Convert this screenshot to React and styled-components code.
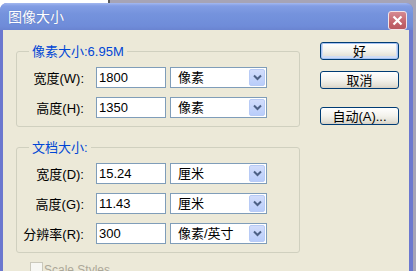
import React from 'react'
import styled, { createGlobalStyle } from 'styled-components'

const GlobalStyle = createGlobalStyle`
  html, body {
    margin: 0;
    padding: 0;
    width: 416px;
    height: 271px;
    overflow: hidden;
    background: linear-gradient(to right, #ffffff 0 108px, #5a5a5a 108px 110px, #a6a4b6 110px);
  }
  body {
    font-family: "Liberation Sans", "Noto Sans CJK SC", sans-serif;
    font-size: 13px;
    color: #000;
  }
`

function Chevron() {
  return (
    <svg width="9" height="7" viewBox="0 0 9 7">
      <path d="M1 1.5 L4.5 5 L8 1.5" fill="none" stroke="#4d6185" strokeWidth="2" />
    </svg>
  )
}

function Field({ label, value, unit }) {
  return (
    <FieldRow>
      <FieldLabel>{label}</FieldLabel>
      <TextBox>{value}</TextBox>
      <Select>
        <SelectText>{unit}</SelectText>
        <SelectArrow>
          <Chevron />
        </SelectArrow>
      </Select>
    </FieldRow>
  )
}

export default function App() {
  return (
    <>
      <GlobalStyle />
      <Window>
        <TitleBar>
          <Title>图像大小</Title>
          <CloseButton>
            <svg width="11" height="11" viewBox="0 0 11 11">
              <path d="M1.5 1.5 L9.5 9.5 M9.5 1.5 L1.5 9.5" stroke="#fff" strokeWidth="2.2" />
            </svg>
          </CloseButton>
        </TitleBar>
        <Body>
          <LeftColumn>
            <Group $top={14}>
              <Caption>像素大小:6.95M</Caption>
              <Fields>
                <Field label="宽度(W):" value="1800" unit="像素" />
                <Field label="高度(H):" value="1350" unit="像素" />
              </Fields>
            </Group>
            <Group $top={13}>
              <Caption>文档大小:</Caption>
              <Fields>
                <Field label="宽度(D):" value="15.24" unit="厘米" />
                <Field label="高度(G):" value="11.43" unit="厘米" />
                <Field label="分辨率(R):" value="300" unit="像素/英寸" />
              </Fields>
            </Group>
            <CheckRow>
              <CheckBox />
              <CheckLabel>Scale Styles</CheckLabel>
            </CheckRow>
          </LeftColumn>
          <ButtonColumn>
            <Button $default $gap={0}>好</Button>
            <Button $gap={11}>取消</Button>
            <Button $gap={18}>自动(A)...</Button>
          </ButtonColumn>
        </Body>
      </Window>
    </>
  )
}

const Window = styled.div`
  margin-top: 3px;
  width: 413px;
  height: 268px;
  display: flex;
  flex-direction: column;
  background: #6b78cf;
  border-radius: 7px 7px 0 0;
  overflow: hidden;
`

const TitleBar = styled.div`
  height: 27px;
  flex: none;
  display: flex;
  align-items: center;
  justify-content: space-between;
  padding: 0 6px 0 8px;
  background: linear-gradient(#a3b8f0 0, #829de4 3px, #7593dd 40%, #6f8cd9 85%, #6a84d1 100%);
`

const Title = styled.span`
  color: #fff;
  font-size: 14px;
  line-height: 16px;
  text-shadow: 0 0 1px rgba(60, 80, 150, 0.6);
  margin-top: 1px;
`

const CloseButton = styled.div`
  width: 19px;
  height: 19px;
  margin-top: 7px;
  box-sizing: border-box;
  border: 1px solid #f3e4e8;
  border-radius: 3px;
  background: linear-gradient(#d58a92, #c4646d 60%, #b85860);
  display: flex;
  align-items: center;
  justify-content: center;
`

const Body = styled.div`
  flex: 1;
  display: flex;
  margin: 0 4px 0 3px;
  padding-left: 13px;
  background: #ece9d8;
`

const LeftColumn = styled.div`
  display: flex;
  flex-direction: column;
  width: 284px;
`

const Group = styled.fieldset`
  margin: ${p => p.$top}px 0 0;
  padding: 8px 31px 8px 0;
  min-width: 0;
  border: 1px solid #d0d0bf;
  border-radius: 3px;
`

const Caption = styled.legend`
  margin-left: 12px;
  padding: 0 3px;
  line-height: 15px;
  color: #0046d5;
`

const Fields = styled.div`
  display: flex;
  flex-direction: column;
  gap: 9px;
`

const FieldRow = styled.div`
  display: flex;
  align-items: center;
  height: 21px;
`

const FieldLabel = styled.span`
  width: 67px;
  margin-right: 12px;
  text-align: right;
  white-space: nowrap;
`

const TextBox = styled.div`
  width: 70px;
  height: 21px;
  box-sizing: border-box;
  border: 1px solid #7f9db9;
  background: #fff;
  padding: 0 2px;
  line-height: 19px;
`

const Select = styled.div`
  width: 97px;
  height: 21px;
  margin-left: 4px;
  box-sizing: border-box;
  border: 1px solid #7f9db9;
  background: #fff;
  display: flex;
  align-items: center;
  justify-content: space-between;
  padding: 1px;
`

const SelectText = styled.span`
  padding-left: 6px;
  line-height: 17px;
`

const SelectArrow = styled.div`
  width: 16px;
  height: 17px;
  box-sizing: border-box;
  border: 1px solid #b8cbf6;
  border-radius: 2px;
  background: linear-gradient(#d2ddfb, #b9cdfa);
  display: flex;
  align-items: center;
  justify-content: center;
`

const CheckRow = styled.div`
  display: flex;
  align-items: flex-start;
  margin: 9px 0 0 14px;
`

const CheckBox = styled.div`
  width: 13px;
  height: 13px;
  box-sizing: border-box;
  border: 1px solid #cac8bb;
  background: #f7f7f3;
`

const CheckLabel = styled.span`
  margin-left: 1px;
  margin-top: 1px;
  color: #aca899;
  font-size: 12px;
  line-height: 14px;
`

const ButtonColumn = styled.div`
  display: flex;
  flex-direction: column;
  margin-left: 20px;
  padding-top: 12px;
`

const Button = styled.div`
  width: 79px;
  height: 18px;
  margin-top: ${p => p.$gap}px;
  box-sizing: border-box;
  border: 1px solid #003c74;
  border-radius: 3px;
  background: linear-gradient(#ffffff, #f3f2ec 50%, #e3e0d5 85%, #d6d0c5);
  display: flex;
  align-items: center;
  justify-content: center;
  line-height: 15px;
  box-shadow: ${p => (p.$default ? 'inset 0 0 0 1px #a6c2f2, inset 0 -1px 0 2px #cfdcf5' : 'none')};
`
